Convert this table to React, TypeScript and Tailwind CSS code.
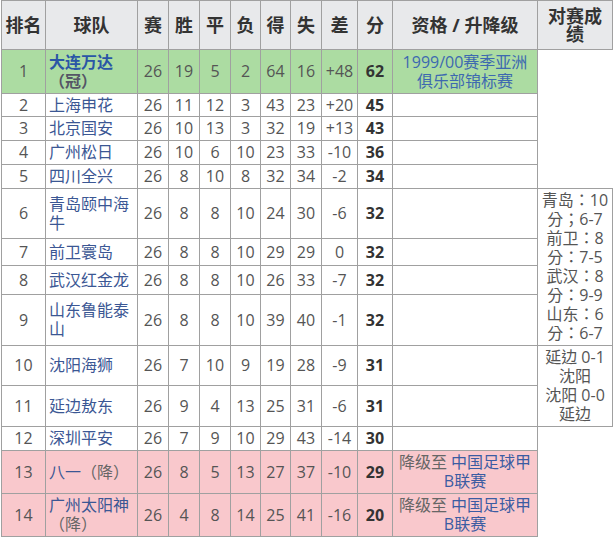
import React from "react";

type Row = {
  rank: number;
  team: string;
  note?: string;
  stats: (number | string)[];
  pts: number;
  bg?: string;
  h: string;
};

const rows: Row[] = [
  { rank: 1, team: "大连万达", note: "（冠）", stats: [26, 19, 5, 2, 64, 16, "+48"], pts: 62, bg: "bg-[#acdca2]", h: "h-[44px]" },
  { rank: 2, team: "上海申花", stats: [26, 11, 12, 3, 43, 23, "+20"], pts: 45, h: "h-[23px]" },
  { rank: 3, team: "北京国安", stats: [26, 10, 13, 3, 32, 19, "+13"], pts: 43, h: "h-[24px]" },
  { rank: 4, team: "广州松日", stats: [26, 10, 6, 10, 23, 33, "-10"], pts: 36, h: "h-[24px]" },
  { rank: 5, team: "四川全兴", stats: [26, 8, 10, 8, 32, 34, "-2"], pts: 34, h: "h-[24px]" },
  { rank: 6, team: "青岛颐中海牛", stats: [26, 8, 8, 10, 24, 30, "-6"], pts: 32, h: "h-[50px]" },
  { rank: 7, team: "前卫寰岛", stats: [26, 8, 8, 10, 29, 29, "0"], pts: 32, h: "h-[27px]" },
  { rank: 8, team: "武汉红金龙", stats: [26, 8, 8, 10, 26, 33, "-7"], pts: 32, h: "h-[29px]" },
  { rank: 9, team: "山东鲁能泰山", stats: [26, 8, 8, 10, 39, 40, "-1"], pts: 32, h: "h-[51px]" },
  { rank: 10, team: "沈阳海狮", stats: [26, 7, 10, 9, 19, 28, "-9"], pts: 31, h: "h-[40px]" },
  { rank: 11, team: "延边敖东", stats: [26, 9, 4, 13, 25, 31, "-6"], pts: 31, h: "h-[41px]" },
  { rank: 12, team: "深圳平安", stats: [26, 7, 9, 10, 29, 43, "-14"], pts: 30, h: "h-[24px]" },
  { rank: 13, team: "八一", note: "（降）", stats: [26, 8, 5, 13, 27, 37, "-10"], pts: 29, bg: "bg-[#f9c8cc]", h: "h-[43px]" },
  { rank: 14, team: "广州太阳神", note: "（降）", stats: [26, 4, 8, 14, 25, 41, "-16"], pts: 20, bg: "bg-[#f9c8cc]", h: "h-[43px]" },
];

const cell = "border border-[#a0a0a0] px-[3px] py-0 align-middle";

function Qualification({ rank }: { rank: number }) {
  if (rank === 1) {
    return (
      <td className={`${cell} text-center text-[#3d69b0]`}>
        1999/00赛季亚洲
        <br />
        俱乐部锦标赛
      </td>
    );
  }
  if (rank >= 13) {
    return (
      <td className={`${cell} text-center text-[#666]`}>
        降级至 <span className="text-[#3b5ca2]">中国足球甲<br />B联赛</span>
      </td>
    );
  }
  return <td className={cell}></td>;
}

// 对赛成绩: 用繁体字形让全角标点居中
const h2hFont = { fontFamily: '"Open Sans", "Noto Sans CJK TC", sans-serif' };

function HeadToHead({ rank }: { rank: number }) {
  if (rank === 6) {
    return (
      <td rowSpan={4} className={`${cell} bg-white px-0 text-center text-[#555]`} style={h2hFont}>
        青岛：10
        <br />
        分；6-7
        <br />
        前卫：8
        <br />
        分：7-5
        <br />
        武汉：8
        <br />
        分：9-9
        <br />
        山东：6
        <br />
        分：6-7
      </td>
    );
  }
  if (rank === 10) {
    return (
      <td rowSpan={2} className={`${cell} bg-white px-0 text-center text-[#555]`} style={h2hFont}>
        延边 0-1
        <br />
        沈阳
        <br />
        沈阳 0-0
        <br />
        延边
      </td>
    );
  }
  return null;
}

export default function App() {
  const heads = ["赛", "胜", "平", "负", "得", "失", "差", "分"];
  const headW = ["w-[31px]", "w-[31px]", "w-[31px]", "w-[30px]", "w-[30px]", "w-[31px]", "w-[36px]", "w-[35px]"];

  return (
    <div
      className="min-h-[541px] w-[614px] bg-white pl-px text-[16px] leading-[19px] text-[#555] [text-spacing-trim:space-all]"
      style={{ fontFamily: '"Open Sans", "Noto Sans CJK SC", sans-serif' }}
    >
      <table className="w-[611px] table-fixed border-collapse">
        <thead>
          <tr className="h-[49px] bg-[#e8e9eb] text-[18px] leading-[22px] font-bold text-[#333]">
            <th className={`${cell} w-[44px] px-0`}>排名</th>
            <th className={`${cell} w-[92px]`}>球队</th>
            {heads.map((h, i) => (
              <th key={h} className={`${cell} ${headW[i]} px-0`}>
                {h}
              </th>
            ))}
            <th className={`${cell} w-[145px] px-0`}>资格 / 升降级</th>
            <th className={`${cell} w-[75px] px-0 leading-[18px]`}>
              对赛成
              <br />
              绩
            </th>
          </tr>
        </thead>
        <tbody>
          {rows.map((r) => (
            <tr key={r.rank} className={`${r.h} ${r.bg ?? "bg-white"}`}>
              <td className={`${cell} text-center`}>{r.rank}</td>
              <td className={`${cell} text-left`}>
                <span
                  className={
                    r.rank === 1 ? "font-bold text-[#2a56a6]" : "text-[#3b5794]"
                  }
                >
                  {r.team}
                </span>
                {r.note && (
                  <span className={r.rank === 1 ? "font-bold text-[#556]" : "text-[#666]"}>
                    {r.note}
                  </span>
                )}
              </td>
              {r.stats.map((s, i) => (
                <td key={i} className={`${cell} px-0 text-center`}>
                  {s}
                </td>
              ))}
              <td className={`${cell} px-0 text-center font-bold text-[#333]`}>{r.pts}</td>
              <Qualification rank={r.rank} />
              <HeadToHead rank={r.rank} />
            </tr>
          ))}
        </tbody>
      </table>
    </div>
  );
}
